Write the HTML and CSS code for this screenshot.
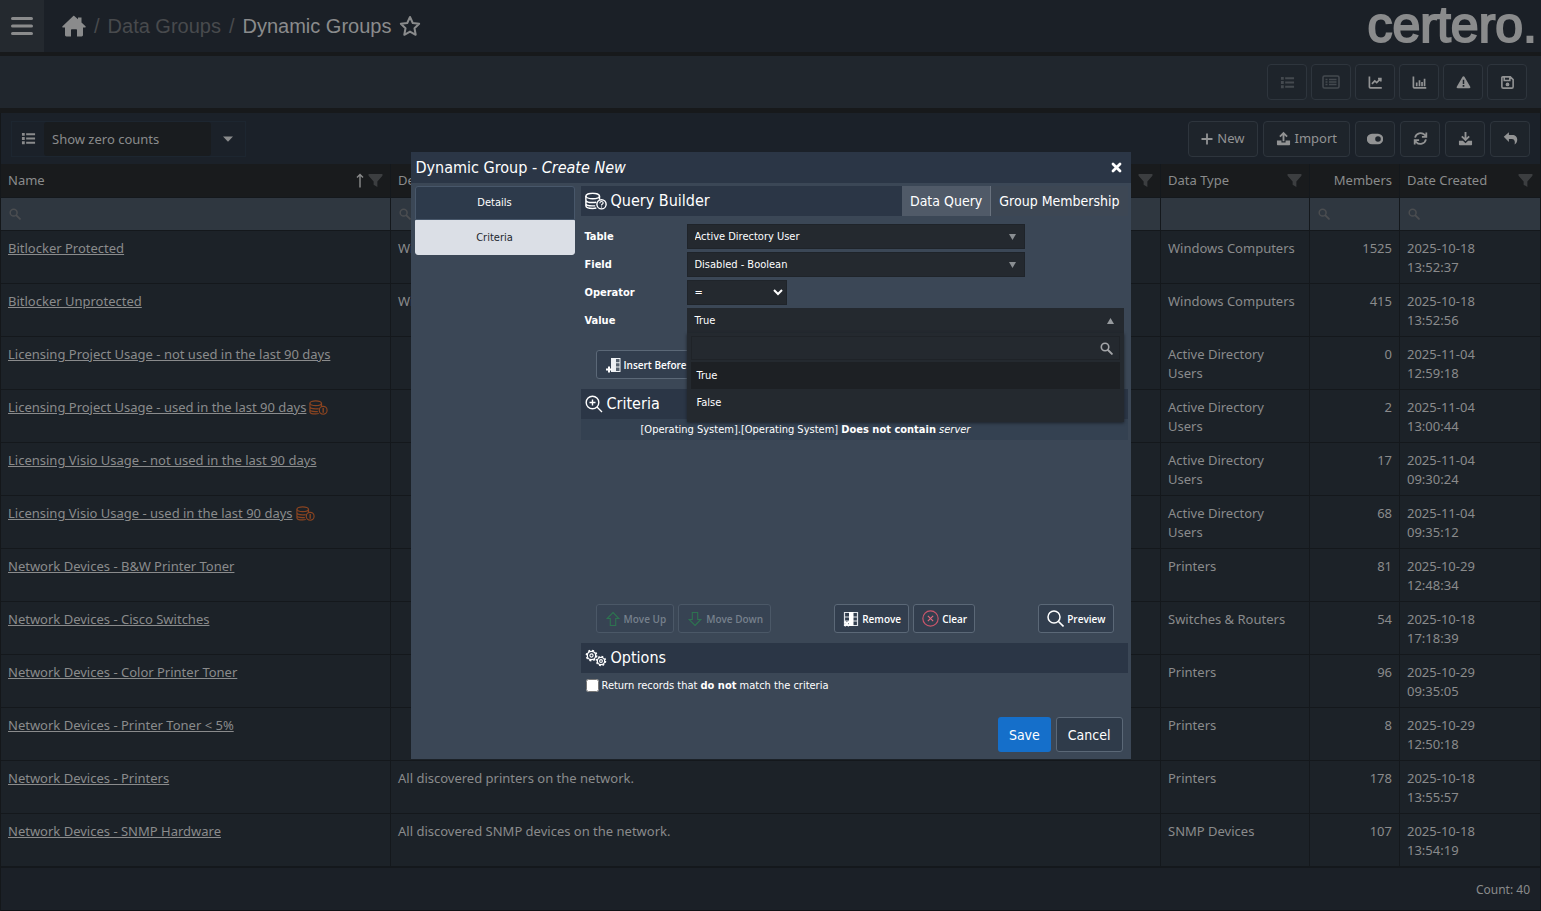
FILE: index.html
```html
<!DOCTYPE html>
<html lang="en">
<head>
<meta charset="utf-8">
<title>Dynamic Groups</title>
<link rel="stylesheet" href="styles.css">
</head>
<body>
<svg class="defs" aria-hidden="true">
  <symbol id="search" viewBox="0 0 16 16"><circle cx="6.2" cy="6.2" r="4.6" fill="none" stroke="currentColor" stroke-width="2"/><path d="M9.8 9.8 14.6 14.6" stroke="currentColor" stroke-width="2.4" stroke-linecap="round"/></symbol>
  <symbol id="funnel" viewBox="0 0 16 16"><path d="M.6 1h14.8v2L10 9v6L6 12.400V9L.6 3z" fill="currentColor"/></symbol>
  <symbol id="list" viewBox="0 0 16 16"><path d="M1 2h3v3H1zM1 6.500h3v3H1zM1 11h3v3H1zM5.500 2.500H15v2H5.500zM5.500 7H15v2H5.500zM5.500 11.500H15v2H5.500z" fill="currentColor"/></symbol>
  <symbol id="db" viewBox="0 0 20 16"><g fill="none" stroke="currentColor" stroke-width="1.300"><ellipse cx="7" cy="3.400" rx="6.200" ry="2.500"/><path d="M.8 3.400v9c0 1.400 2.700 2.400 6.200 2.400 1.200 0 2.300-.1 3.300-.4M13.200 3.400v3.400M.8 7c0 1.400 2.700 2.400 6.200 2.400 1.200 0 2.300-.1 3.200-.3M.8 10.200c0 1.200 2.500 2.200 5.700 2.200h2.800"/><circle cx="15" cy="11" r="4.200"/></g></symbol>
</svg>

<header class="topbar">
  <button class="menu" aria-label="Menu"><svg viewBox="0 0 22 20" width="22" height="20"><path d="M1.500 2.500h19M1.500 10h19M1.500 17.500h19" stroke="currentColor" stroke-width="3" stroke-linecap="round"/></svg></button>
  <nav class="crumbs" aria-label="Breadcrumb">
    <a href="#" aria-label="Home"><svg viewBox="0 0 24 22" width="24" height="22"><path d="M12 .8 16 4.300V2.500h3.500v5L23.500 11.200c.5.600.2 1.300-.6 1.300H21V20c0 .8-.6 1.400-1.400 1.400H15v-6.200c0-.6-.4-1-1-1h-4c-.6 0-1 .4-1 1v6.200H4.400C3.600 21.400 3 20.800 3 20v-7.500H1.100c-.8 0-1.100-.7-.6-1.300L11 1.200c.3-.3.700-.4 1-.4z" fill="currentColor"/></svg></a>
    <span class="dim">/</span><a class="dim" href="#">Data Groups</a><span class="dim">/</span><span>Dynamic Groups</span>
    <button class="star" aria-label="Favourite"><svg viewBox="0 0 24 24" width="22" height="22"><path d="M12 2.200 15 8.700 22 9.600 16.900 14.500 18.200 21.600 12 18.100 5.800 21.600 7.100 14.500 2 9.600 9 8.700z" fill="none" stroke="currentColor" stroke-width="2.200" stroke-linejoin="round"/></svg></button>
  </nav>
  <span class="logo">certero.</span>
</header>

<div class="actions">
  <button class="btn off" aria-label="List"><svg class="i16"><use href="#list"/></svg></button>
  <button class="btn off" aria-label="Detail list"><svg width="18" height="16" viewBox="0 0 18 16"><rect x="1" y="2" width="16" height="12" rx="1.500" fill="none" stroke="currentColor" stroke-width="1.600"/><path d="M3.500 5.500h2M7 5.500h7.500M3.500 8h2M7 8h7.500M3.500 10.500h2M7 10.500h7.500" stroke="currentColor" stroke-width="1.400"/></svg></button>
  <button class="btn" aria-label="Line chart"><svg class="i16" viewBox="0 0 16 16"><path d="M1.500 1.500v11.200q0 1 1 1h12.200M4.200 9.500 7.200 6.300 9.300 8.200 13.500 3.900M10.700 3.800h3v3" fill="none" stroke="currentColor" stroke-width="1.800"/></svg></button>
  <button class="btn" aria-label="Bar chart"><svg class="i16" viewBox="0 0 16 16"><path d="M1.500 1.500v11.200q0 1 1 1h12.700M5 8v4M8 5.500V12M10.700 7.500V12M13.400 4v8" fill="none" stroke="currentColor" stroke-width="1.800"/></svg></button>
  <button class="btn" aria-label="Alerts"><svg class="i16" viewBox="0 0 16 16"><path fill-rule="evenodd" d="M8 1.200c.5 0 .8.200 1 .6l6.200 10.800c.4.800 0 1.600-1 1.600H1.800c-1 0-1.400-.8-1-1.600L7 1.800c.2-.4.500-.6 1-.6zM7.200 5v4.600h1.600V5zM7.100 10.700v1.800h1.800v-1.800z" fill="currentColor"/></svg></button>
  <button class="btn" aria-label="Save layout"><svg class="i16" viewBox="0 0 16 16"><path d="M3 2h8l3 3v7.500q0 1.500-1.500 1.500h-9Q2 14 2 12.500V3q0-1 1-1zM4.500 2.500v3.300h6V2.500" fill="none" stroke="currentColor" stroke-width="1.700"/><circle cx="8" cy="10" r="2" fill="currentColor"/></svg></button>
</div>

<main class="grid">
  <div class="gridbar">
    <div class="picker">
      <svg class="i16"><use href="#list"/></svg>
      <input type="text" value="Show zero counts" aria-label="View">
      <button aria-label="Open views"><svg width="10" height="6" viewBox="0 0 10 6"><path d="M0 .5h10L5 5.800z" fill="currentColor"/></svg></button>
    </div>
    <div class="tools">
      <button class="btn"><svg width="12" height="12" viewBox="0 0 12 12"><path d="M6 .5v11M.5 6h11" stroke="currentColor" stroke-width="1.800"/></svg>New</button>
      <button class="btn"><svg class="i16" viewBox="0 0 16 16"><path d="M7 11V4.500L4.800 6.600 3.500 5.300 8 .8l4.500 4.500-1.300 1.300L9 4.500V11zM1 10h4.800v2.200h4.400V10H15v4.500q0 .8-.8.800H1.800q-.8 0-.8-.8z" fill="currentColor"/></svg>Import</button>
      <button class="btn icon" aria-label="Toggle"><svg width="16" height="16" viewBox="0 0 16 16"><path fill-rule="evenodd" d="M5 2.800h6a5.200 5.200 0 0 1 0 10.400H5A5.200 5.200 0 0 1 5 2.800zM11 5.200a2.800 2.800 0 1 0 0 5.600 2.800 2.800 0 0 0 0-5.600z" fill="currentColor"/></svg></button>
      <button class="btn icon" aria-label="Refresh"><svg class="i16" viewBox="0 0 16 16"><path d="M2.200 7A6 6 0 0 1 12.500 4.200L14 5.700M13.800 9A6 6 0 0 1 3.500 11.800L2 10.300M14.200 1.500v4.700H9.500M1.800 14.500V9.800h4.700" fill="none" stroke="currentColor" stroke-width="1.900"/></svg></button>
      <button class="btn icon" aria-label="Download"><svg class="i16" viewBox="0 0 16 16"><path d="M7 1h2v6.300l2.300-2.200 1.300 1.400L8 11 3.400 6.500l1.300-1.400L7 7.300zM1 10.500h4.200L8 13l2.800-2.500H15v4q0 .8-.8.800H1.800q-.8 0-.8-.8z" fill="currentColor"/></svg></button>
      <button class="btn icon" aria-label="Undo"><svg class="i16" viewBox="0 0 16 16"><path d="M.8 6.200 6.300 1.200v3.100H10c3 0 5.200 2.200 5.200 5 0 2.500-1.300 4-2.900 5.200.7-2.600.4-6-2.800-6H6.300v3.100z" fill="currentColor"/></svg></button>
    </div>
  </div>

  <table>
    <colgroup><col class="c-name"><col><col class="c-type"><col class="c-mem"><col class="c-date"></colgroup>
    <thead>
      <tr>
        <th><div><span>Name</span><svg width="8" height="15" viewBox="0 0 8 15"><path d="M4 14.500V1.500M1 4.500l3-3 3 3" fill="none" stroke="currentColor" stroke-width="1.400"/></svg><svg class="i16 fun"><use href="#funnel"/></svg></div></th>
        <th><div><span>Description</span><svg class="i16 fun"><use href="#funnel"/></svg></div></th>
        <th><div><span>Data Type</span><svg class="i16 fun"><use href="#funnel"/></svg></div></th>
        <th class="num">Members</th>
        <th><div><span>Date Created</span><svg class="i16 fun"><use href="#funnel"/></svg></div></th>
      </tr>
      <tr class="filter">
        <td><svg><use href="#search"/></svg></td><td><svg><use href="#search"/></svg></td><td></td><td><svg><use href="#search"/></svg></td><td><svg><use href="#search"/></svg></td>
      </tr>
    </thead>
    <tbody>
      <tr><td><a href="#">Bitlocker Protected</a></td><td>Windows</td><td>Windows Computers</td><td class="num">1525</td><td>2025-10-18 13:52:37</td></tr>
      <tr><td><a href="#">Bitlocker Unprotected</a></td><td>Windows</td><td>Windows Computers</td><td class="num">415</td><td>2025-10-18 13:52:56</td></tr>
      <tr><td><a href="#">Licensing Project Usage - not used in the last 90 days</a></td><td></td><td>Active Directory Users</td><td class="num">0</td><td>2025-11-04 12:59:18</td></tr>
      <tr><td><a href="#">Licensing Project Usage - used in the last 90 days</a><svg class="flag" viewBox="0 0 20 16"><use href="#db" width="20" height="16"/><path d="M15 8.500v5" stroke="currentColor" stroke-width="1.500"/></svg></td><td></td><td>Active Directory Users</td><td class="num">2</td><td>2025-11-04 13:00:44</td></tr>
      <tr><td><a href="#">Licensing Visio Usage - not used in the last 90 days</a></td><td></td><td>Active Directory Users</td><td class="num">17</td><td>2025-11-04 09:30:24</td></tr>
      <tr><td><a href="#">Licensing Visio Usage - used in the last 90 days</a><svg class="flag" viewBox="0 0 20 16"><use href="#db" width="20" height="16"/><path d="M15 8.500v5" stroke="currentColor" stroke-width="1.500"/></svg></td><td></td><td>Active Directory Users</td><td class="num">68</td><td>2025-11-04 09:35:12</td></tr>
      <tr><td><a href="#">Network Devices - B&amp;W Printer Toner</a></td><td></td><td>Printers</td><td class="num">81</td><td>2025-10-29 12:48:34</td></tr>
      <tr><td><a href="#">Network Devices - Cisco Switches</a></td><td></td><td>Switches &amp; Routers</td><td class="num">54</td><td>2025-10-18 17:18:39</td></tr>
      <tr><td><a href="#">Network Devices - Color Printer Toner</a></td><td></td><td>Printers</td><td class="num">96</td><td>2025-10-29 09:35:05</td></tr>
      <tr><td><a href="#">Network Devices - Printer Toner &lt; 5%</a></td><td></td><td>Printers</td><td class="num">8</td><td>2025-10-29 12:50:18</td></tr>
      <tr><td><a href="#">Network Devices - Printers</a></td><td>All discovered printers on the network.</td><td>Printers</td><td class="num">178</td><td>2025-10-18 13:55:57</td></tr>
      <tr><td><a href="#">Network Devices - SNMP Hardware</a></td><td>All discovered SNMP devices on the network.</td><td>SNMP Devices</td><td class="num">107</td><td>2025-10-18 13:54:19</td></tr>
    </tbody>
  </table>
  <div class="count">Count: 40</div>
</main>

<div class="overlay">
  <section class="dialog" role="dialog" aria-labelledby="dlg-title">
    <header class="dlg-head">
      <h1 id="dlg-title">Dynamic Group - <em>Create New</em></h1>
      <button aria-label="Close"><svg width="11" height="11" viewBox="0 0 11 11"><path d="M2 2l7 7M9 2 2 9" stroke="currentColor" stroke-width="2.800" stroke-linecap="round"/></svg></button>
    </header>
    <div class="dlg-body">
      <nav class="side"><button>Details</button><button class="on">Criteria</button></nav>
      <div class="panel">
        <div class="sec">
          <svg width="22" height="18" viewBox="0 0 20 16"><use href="#db" width="20" height="16"/><path d="M13.500 10c0-2 3-2 3-.2 0 1-1.500 1-1.500 2.200M15 13v1" stroke="currentColor" fill="none"/></svg>
          <h2>Query Builder</h2>
          <div class="modes"><button class="on">Data Query</button><button>Group Membership</button></div>
        </div>
        <form class="form">
          <div class="row"><label for="tbl">Table</label><select id="tbl" class="sel wide"><option>Active Directory User</option></select></div>
          <div class="row"><label for="fld">Field</label><select id="fld" class="sel wide"><option>Disabled - Boolean</option></select></div>
          <div class="row"><label for="op">Operator</label><select id="op" class="sel op"><option>=</option></select></div>
          <div class="row"><label for="val">Value</label>
            <div class="combo">
              <button id="val" type="button" class="combo-val" aria-expanded="true"><span>True</span><svg width="7" height="6" viewBox="0 0 7 6"><path d="M0 6h7L3.500 0z" fill="#969a9e"/></svg></button>
              <div class="pop">
                <div class="find"><input type="text" aria-label="Search values"><svg width="13" height="13"><use href="#search"/></svg></div>
                <ul role="listbox" aria-label="Value"><li role="option" aria-selected="true">True</li><li role="option">False</li></ul>
              </div>
            </div>
          </div>
        </form>
        <div class="btns insert"><button class="sbtn"><svg width="16" height="16" viewBox="0 0 16 16"><path d="M6 1h9.500v14H6z" fill="#edf0f3"/><path d="M11 2h3.500v3.300H11zM11 6.300h3.500v3.300H11zM11 10.600h3.500V14H11z" fill="#55606d"/><path d="M4 9.500v6M1 12.500h6" stroke="#fff" stroke-width="2"/></svg>Insert Before</button></div>
        <div class="sec crit">
          <svg width="18" height="18" viewBox="0 0 18 18"><path d="M12 12l5 5M7.500 4.500v6M4.500 7.500h6" stroke="currentColor" stroke-width="1.400"/><circle cx="7.500" cy="7.500" r="6.300" fill="none" stroke="currentColor" stroke-width="1.400"/></svg>
          <h2>Criteria</h2>
        </div>
        <p class="rule">[Operating System].[Operating System] <b>Does not contain</b> <em>server</em></p>
        <div class="btns bottom">
          <button class="sbtn" disabled><svg width="16" height="16" viewBox="0 0 14 16"><path d="M7 1.500 12.800 7.500H9.700v7H4.300v-7H1.200z" fill="none" stroke="#2d7350" stroke-width="1.100"/></svg>Move Up</button>
          <button class="sbtn" disabled><svg width="16" height="16" viewBox="0 0 14 16"><path d="M7 14.500 12.800 8.500H9.700v-7H4.300v7H1.200z" fill="none" stroke="#2d7350" stroke-width="1.100"/></svg>Move Down</button>
          <span class="gap"></span>
          <button class="sbtn"><svg width="16" height="16" viewBox="0 0 16 16"><path d="M1.500 1.500h13v13h-13zM1.500 6h13M1.500 10h13" fill="none" stroke="#dfe3e8" stroke-width="1.200"/><path d="M6 1h4.500v14H6z" fill="#fff"/><path d="M1.500 10.500l4.500 4.500M6 10.500l-4.500 4.500" stroke="#fff" stroke-width="2"/></svg>Remove</button>
          <button class="sbtn"><svg width="17" height="17" viewBox="0 0 16 16"><circle cx="8" cy="8" r="7.200" fill="none" stroke="#c9566b" stroke-width="1.100"/><path d="M5.500 5.500l5 5M10.500 5.500l-5 5" stroke="#e0677b" stroke-width="1.100"/></svg>Clear</button>
          <span class="gap wide-gap"></span>
          <button class="sbtn"><svg width="17" height="17" viewBox="0 0 17 17"><path d="M11.500 11.500l5 5" stroke="currentColor" stroke-width="1.600"/><circle cx="7" cy="7" r="6" fill="none" stroke="currentColor" stroke-width="1.500"/></svg>Preview</button>
        </div>
        <div class="sec">
          <svg width="22" height="18" viewBox="0 0 22 18"><g fill="none" stroke="currentColor"><circle cx="6.500" cy="6.500" r="4.200" stroke-width="1.300"/><circle cx="6.500" cy="6.500" r="1.600" stroke-width="1.100"/><circle cx="6.500" cy="6.500" r="5.200" stroke-width="1.400" stroke-dasharray="2 2.080"/><circle cx="16" cy="12" r="3.700" stroke-width="1.300"/><circle cx="16" cy="12" r="1.400" stroke-width="1.100"/><circle cx="16" cy="12" r="4.600" stroke-width="1.300" stroke-dasharray="1.800 1.810"/></g></svg>
          <h2>Options</h2>
        </div>
        <label class="check"><input type="checkbox"><span>Return records that <b>do not</b> match the criteria</span></label>
      </div>
    </div>
    <footer class="dlg-foot"><button class="save">Save</button><button class="cancel">Cancel</button></footer>
  </section>
</div>
</body>
</html>
```

FILE: styles.css
```css
* { box-sizing: border-box; }
body {
  margin: 0;
  min-height: 100vh;
  background: #1b2027;
  color: #8a8b8c;
  font: 13px/19px "Noto Sans", sans-serif;
  display: flex;
  flex-direction: column;
}
button, input, select { font: inherit; color: inherit; margin: 0; }
button { padding: 0; border: 0; background: none; cursor: pointer; }
a { color: inherit; }
svg { flex: none; display: block; }
.defs { position: absolute; width: 0; height: 0; }
.i16 { width: 15px; height: 15px; }

.topbar {
  height: 56px;
  border-bottom: 4px solid #17191b;
  background: #1b2027;
  display: flex;
  align-items: stretch;
}
.menu { width: 44px; background: #24292f; display: grid; place-items: center; }
.crumbs {
  flex: 1;
  display: flex;
  align-items: center;
  gap: 8px;
  padding-left: 18px;
  font: 20px/24px "Liberation Sans", sans-serif;
}
.crumbs a { text-decoration: none; }
.dim { color: #484a4d; }
.logo {
  font: 50px/50px "Liberation Sans", sans-serif;
  -webkit-text-stroke: 2px #8a8b8c;
  padding-right: 4px;
}

.actions {
  height: 57px;
  background: #20262d;
  border-bottom: 5px solid #17191b;
  display: flex;
  align-items: center;
  justify-content: flex-end;
  gap: 4px;
  padding-right: 14px;
}
.btn {
  min-width: 40px;
  height: 36px;
  border: 1px solid #2e353d;
  border-radius: 4px;
  background: #1e242b;
  color: #929394;
  display: flex;
  align-items: center;
  justify-content: center;
  gap: 4px;
}
.off { color: #44494f; }

.grid { flex: 1; display: flex; flex-direction: column; border: solid #14171a; border-width: 0 1px; }
.gridbar {
  height: 51px;
  background: #1b2129;
  display: flex;
  align-items: center;
  justify-content: space-between;
  padding: 0 10px;
}
.picker {
  height: 36px;
  width: 235px;
  border: 1px solid #1d2630;
  display: flex;
  align-items: center;
  padding-left: 9px;
}
.picker input {
  flex: 1;
  min-width: 0;
  height: 34px;
  margin-left: 8px;
  padding: 0 8px;
  border: 0;
  border-radius: 3px;
  background: #191c1f;
}
.picker button { width: 34px; height: 34px; display: grid; place-items: center; }
.tools { display: flex; gap: 5px; }
.tools .btn { padding: 0 12px; }
.tools .icon { padding: 0; }

table { width: 100%; table-layout: fixed; border-collapse: separate; border-spacing: 0; }
.c-name { width: 390px; }
.c-type { width: 149px; }
.c-mem { width: 90px; }
.c-date { width: 140px; }
th, td { border: solid #14181c; border-width: 0 1px 1px 0; text-align: left; vertical-align: top; font-weight: 400; padding: 7px; }
th:last-child, td:last-child { border-right: 0; }
th { background: #191b1d; }
th div { display: flex; align-items: center; gap: 4px; height: 19px; }
th div span { flex: 1; }
.fun { color: #3c3e40; }
.filter td { background: #2f3740; height: 33px; padding: 10px 8px; }
.filter svg { width: 12px; height: 12px; color: #4b4d50; }
tbody td { height: 53px; background: #1c2228; padding: 8px 7px 6px; }
td:nth-child(5) { padding-right: 50px; }
th.num, td.num { text-align: right; }
.flag { display: inline-block; width: 19px; height: 15px; margin-left: 3px; vertical-align: -3px; color: #8a4420; }
.count { flex: 1; min-height: 43px; display: flex; align-items: center; justify-content: flex-end; padding-right: 10px; font-size: 12px; border-bottom: 1px solid #101215; border-top: 1px solid #14181c; }

.overlay { position: fixed; inset: 0; display: grid; place-items: center; }
.dialog {
  width: 720px;
  max-width: 100%;
  background: #3b4756;
  color: #fff;
  font: 11px/16px "DejaVu Sans Condensed", "DejaVu Sans", sans-serif;
  font-stretch: condensed;
}
.dlg-head {
  height: 31px;
  background: #2b3646;
  display: flex;
  align-items: center;
  justify-content: space-between;
  padding: 0 9px 0 5px;
}
h1, h2 { margin: 0; font-size: 16px; line-height: 20px; font-weight: 400; }
.dlg-body { display: flex; gap: 6px; padding: 3px 3px 0 4px; }
.side { width: 160px; flex: none; display: flex; flex-direction: column; }
.side button { height: 34px; background: #2d3a4b; border: 1px solid #48576a; border-radius: 3px 3px 0 0; }
.side .on { height: 35px; background: #dbdfe6; border-color: #dbdfe6; color: #22272e; border-radius: 0 0 3px 3px; }
.panel { flex: 1; min-width: 0; }
.sec { height: 30px; background: #2b3646; display: flex; align-items: center; gap: 4px; padding-left: 4px; }
.modes { margin-left: auto; align-self: stretch; display: flex; font-size: 14px; }
.modes button { background: #3d4754; padding: 0 8px; }
.modes .on { background: #505a68; border-right: 1px solid #69727e; }
.form { display: grid; gap: 3px; padding: 8px 4px 0; }
.row { display: flex; align-items: center; height: 25px; }
.row label { width: 102px; font-weight: 700; }
.sel { height: 25px; border: 1px solid #1f242a; border-radius: 0; background-color: #24292f; padding: 0 3px; outline: 0; }
.wide {
  appearance: none;
  width: 338px;
  padding: 0 7px;
  background-image: url("data:image/svg+xml,%3Csvg xmlns='http://www.w3.org/2000/svg' width='7' height='6'%3E%3Cpath d='M0 0h7L3.500 6z' fill='%238a8e92'/%3E%3C/svg%3E");
  background-repeat: no-repeat;
  background-position: right 8px center;
}
.op { width: 100px; }
.combo { position: relative; flex: 1; }
.combo-val { width: 100%; height: 25px; background: #24292f; display: flex; align-items: center; justify-content: space-between; padding: 0 10px 0 8px; }
.pop { position: absolute; z-index: 2; top: 100%; left: 0; right: 0; background: #24292f; padding: 3px 4px 6px; box-shadow: 0 1px 3px #1c2128; }
.find { height: 24px; border: 1px solid #1f2328; display: flex; align-items: center; padding-right: 6px; color: #a3a5a8; }
.find input { flex: 1; border: 0; background: none; height: 22px; outline: 0; }
.pop ul { list-style: none; margin: 2px 0 0; padding: 0; }
.pop li { height: 27px; line-height: 27px; padding-left: 6px; }
.pop li[aria-selected] { background: #1d2024; }
.btns { display: flex; gap: 4px; padding: 0 15px; }
.insert { padding-top: 17px; }
.sbtn {
  height: 29px;
  border: 1px solid #5b6877;
  border-radius: 3px;
  background: #323e4e;
  font-family: "Open Sans", sans-serif;
  font-stretch: normal;
  font-size: 10px;
  font-weight: 600;
  display: flex;
  align-items: center;
  gap: 3px;
  padding: 0 7px 0 8px;
}
.sbtn:disabled { background: #374353; border-color: #4b5867; color: #76808c; }
.crit { margin-top: 10px; }
.rule { margin: 0; height: 21px; line-height: 21px; background: #344151; padding-left: 60px; }
.bottom { margin: 164px 0 10px; padding-right: 14px; }
.gap { flex: 1; }
.check { display: flex; align-items: center; gap: 3px; height: 25px; padding-left: 5px; }
.check input { width: 13px; height: 13px; }
.dlg-foot { display: flex; justify-content: flex-end; gap: 5px; padding: 19px 8px 7px; font-size: 14px; }
.dlg-foot button { height: 35px; border-radius: 3px; }
.save { background: #156fca; padding: 0 11px; }
.cancel { background: #2f3b4a; border: 1px solid #5b6877; padding: 0 11px; }
```
